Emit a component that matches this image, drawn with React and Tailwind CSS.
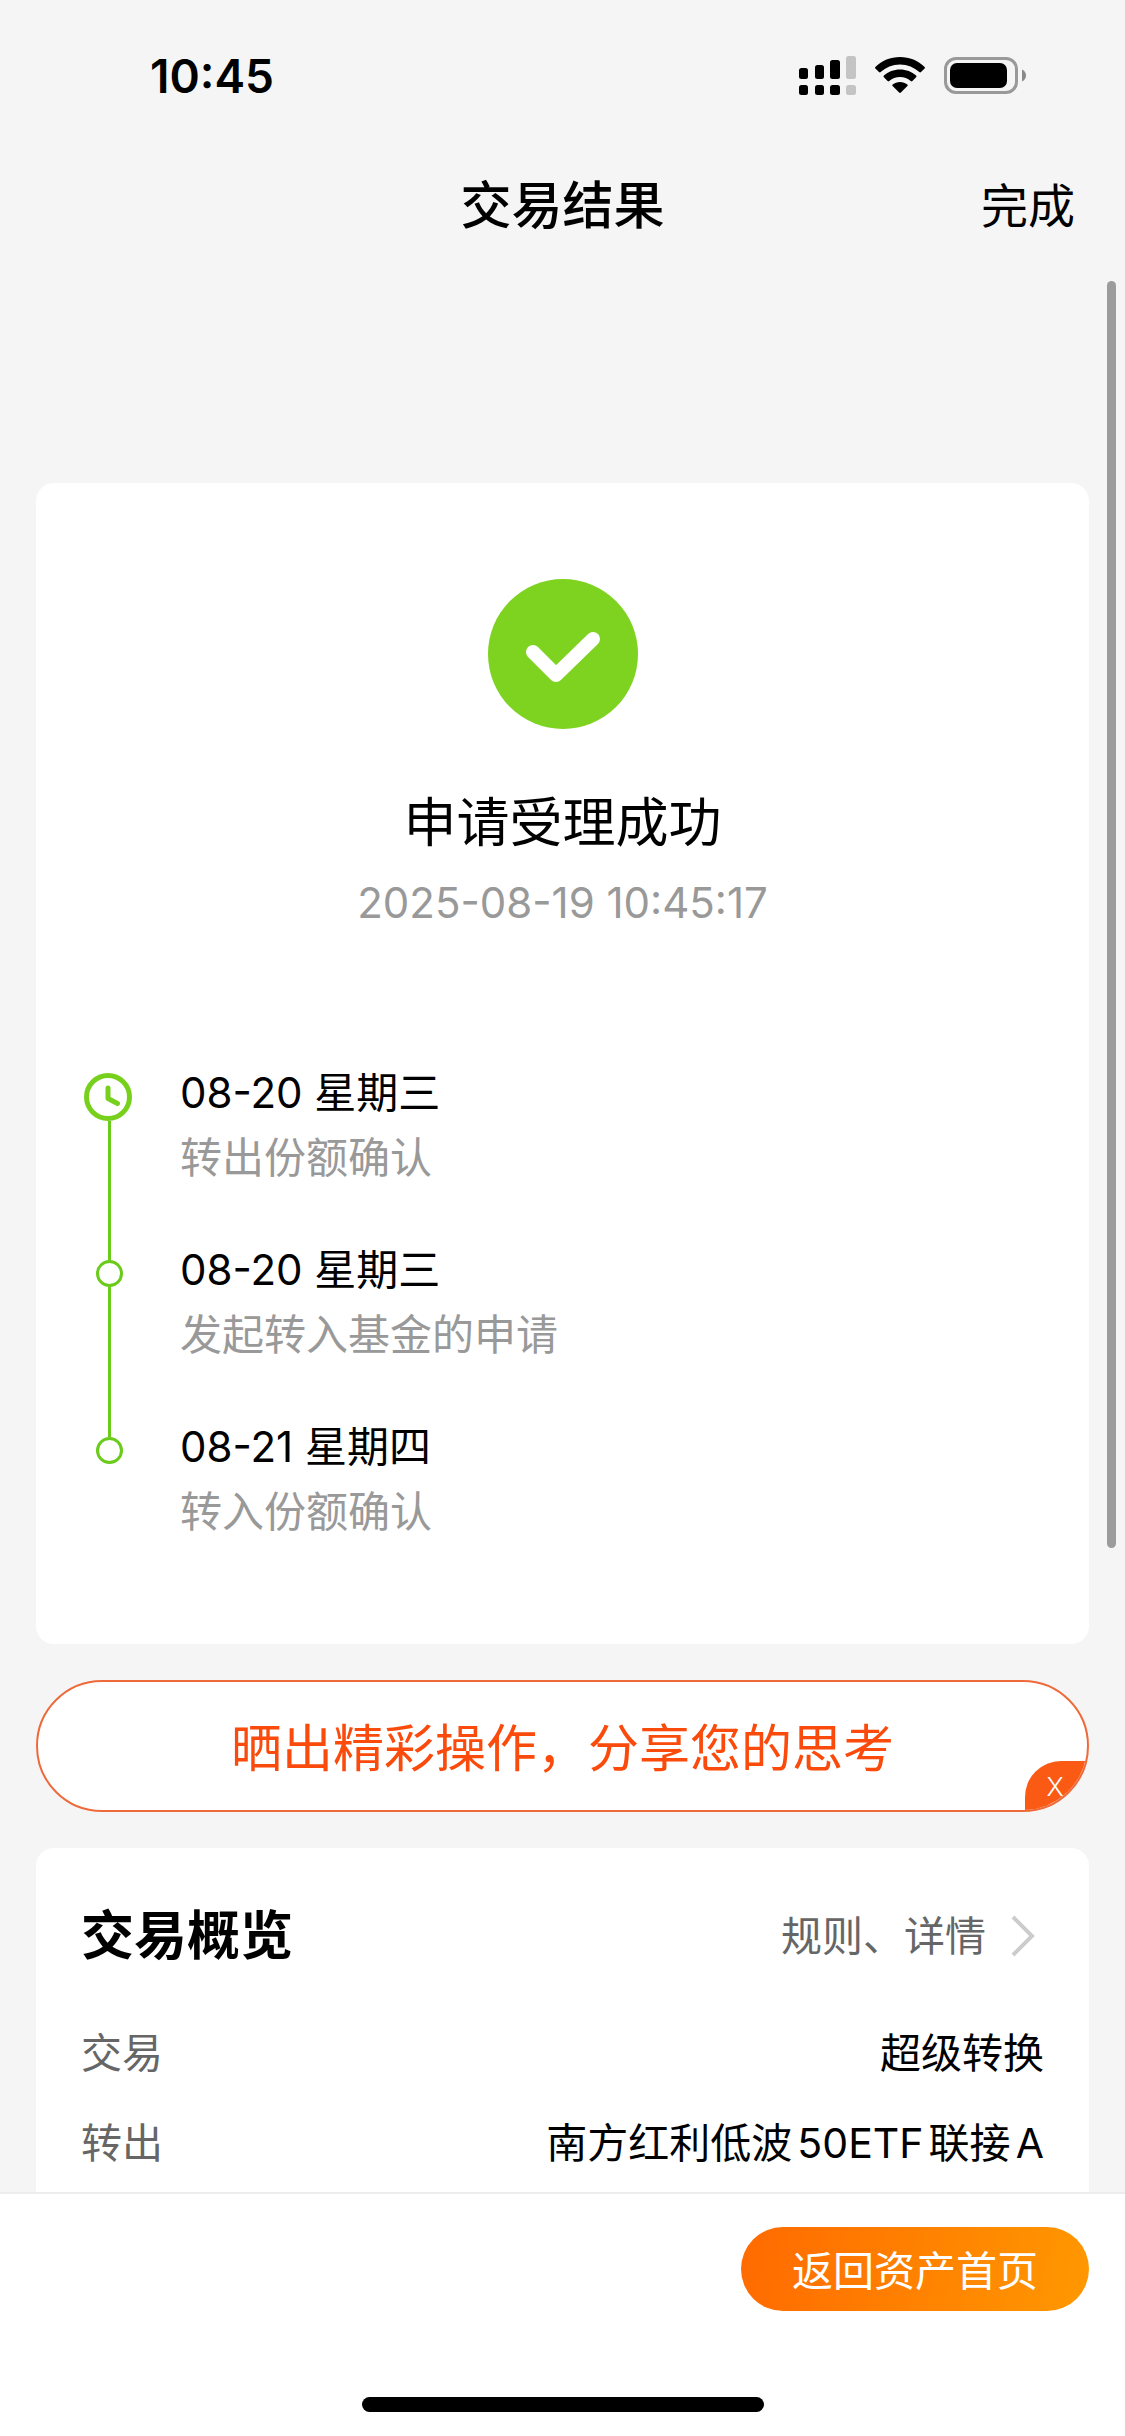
import React from 'react';

const steps = [
    { date: '08-20 星期三', text: '转出份额确认' },
    { date: '08-20 星期三', text: '发起转入基金的申请' },
    { date: '08-21 星期四', text: '转入份额确认' },
];

const overview = [
    { label: '交易', value: '超级转换' },
    { label: '转出', value: '南方红利低波50ETF联接A' },
];

function SignalIcon() {
    return (
        <svg width="57" height="39" viewBox="0 0 57 39" aria-hidden="true">
            <g fill="#000">
                <rect x="0" y="12" width="9" height="11" rx="2.5" />
                <rect x="16" y="9" width="9" height="14" rx="2.5" />
                <rect x="31" y="4" width="10" height="19" rx="2.5" />
                <rect x="0" y="29" width="9" height="10" rx="2.5" />
                <rect x="16" y="29" width="9" height="10" rx="2.5" />
                <rect x="31" y="29" width="10" height="10" rx="2.5" />
            </g>
            <g fill="#c4c4c4">
                <rect x="47" y="0" width="10" height="23" rx="2.5" />
                <rect x="47" y="29" width="10" height="10" rx="2.5" />
            </g>
        </svg>
    );
}

function WifiIcon() {
    return (
        <svg width="50" height="36" viewBox="0 0 50 36" aria-hidden="true">
            <path d="M25 0C34.500 0 43.200 3.600 49.600 9.900Q50.400 10.700 49.600 11.500L46 15.100Q45.200 15.900 44.300 15.100C39.200 10.300 32.500 7.400 25 7.400S10.800 10.300 5.700 15.100Q4.800 15.900 4 15.100L.4 11.500Q-.4 10.700 .4 9.900C6.800 3.600 15.500 0 25 0Z" />
            <path d="M25 12.500C31.200 12.500 36.800 14.800 41.100 18.600Q42 19.400 41.100 20.300L37.400 24Q36.600 24.800 35.700 24C32.800 21.500 29.100 20 25 20S17.200 21.500 14.300 24Q13.400 24.800 12.600 24L8.900 20.300Q8 19.400 8.900 18.600C13.200 14.800 18.800 12.500 25 12.500Z" />
            <path d="M25 25C27.800 25 30.300 25.900 32.300 27.500Q33.200 28.300 32.400 29.100L25.900 35.500Q25 36.300 24.100 35.500L17.600 29.100Q16.800 28.300 17.700 27.500C19.700 25.900 22.200 25 25 25Z" />
        </svg>
    );
}

function BatteryIcon() {
    return (
        <svg width="82" height="37" viewBox="0 0 82 37" aria-hidden="true">
            <rect x="1.500" y="1.500" width="71" height="34" rx="10.500" fill="none" stroke="#999" strokeWidth="3" />
            <rect x="6" y="6" width="57" height="25" rx="7" fill="#000" />
            <path d="M78 12.500C80.500 13.600 82 15.900 82 18.500S80.500 23.400 78 24.500Z" fill="#8a8a8a" />
        </svg>
    );
}

function SuccessIcon() {
    return (
        <svg width="150" height="150" viewBox="0 0 150 150" aria-hidden="true">
            <circle cx="75" cy="75" r="75" fill="#7ed321" />
            <path d="M45 73L68 96L105 60" fill="none" stroke="#fff" strokeWidth="14" strokeLinecap="round" strokeLinejoin="round" />
        </svg>
    );
}

function ClockIcon() {
    return (
        <svg className="shrink-0 self-start" width="48" height="48" viewBox="0 0 48 48" aria-hidden="true">
            <circle cx="24" cy="24" r="21.500" fill="none" stroke="#76d01c" strokeWidth="5" />
            <path d="M24 15V25.500L33.500 30.500" fill="none" stroke="#76d01c" strokeWidth="5" strokeLinecap="round" strokeLinejoin="round" />
        </svg>
    );
}

function Step({ step, first, last }) {
    return (
        <li className="flex gap-[45px]">
            <div className="flex w-[51px] flex-col items-center">
                {first ? (
                    <div className="flex w-full flex-col pt-[13px]"><ClockIcon /></div>
                ) : (
                    <>
                        <div className="h-[23px] w-[3px] bg-[#6acb1b]"></div>
                        <div className="size-[27px] shrink-0 rounded-full border-3 border-[#6acb1b] bg-white"></div>
                    </>
                )}
                {!last && <div className="w-[3px] flex-1 bg-[#6acb1b]"></div>}
            </div>
            <div className={last ? '' : 'pb-[47px]'}>
                <p className="text-[42px] leading-[66px]">{step.date}</p>
                <p className="text-[42px] leading-[64px] text-[#999]">{step.text}</p>
            </div>
        </li>
    );
}

export default function App() {
    return (
        <div className="relative flex h-screen flex-col overflow-hidden bg-[#f5f5f5] font-['Inter','Noto_Sans_CJK_SC',sans-serif] text-black">
            {/* status bar */}
            <div className="flex h-[144px] shrink-0 items-center justify-between pt-2 pr-[99px] pl-[150px]">
                <span className="text-[46px] leading-[60px] font-semibold">10:45</span>
                <div className="flex items-center gap-[19px] pb-0.5">
                    <SignalIcon />
                    <WifiIcon />
                    <BatteryIcon />
                </div>
            </div>

            <header className="grid h-[120px] shrink-0 grid-cols-[1fr_auto_1fr] items-center px-[50px] pt-1">
                <h1 className="col-start-2 text-[51px] leading-[72px] font-medium">交易结果</h1>
                <button type="button" className="justify-self-end text-[47px] leading-[72px]">完成</button>
            </header>

            <main className="flex min-h-0 flex-1 flex-col gap-9 px-9 pt-[219px]">
                <section className="rounded-[18px] bg-white px-12 pt-24 pb-[100px]">
                    <div className="flex flex-col items-center">
                        <SuccessIcon />
                        <h2 className="mt-[58px] text-[53px] leading-[72px]">申请受理成功</h2>
                        <p className="mt-[14px] text-[42px] leading-[60px] text-[#999]">2025-08-19 10:45:17</p>
                    </div>
                    <ol className="mt-[127px]">
                        {steps.map((step, i) => (
                            <Step key={i} step={step} first={i === 0} last={i === steps.length - 1} />
                        ))}
                    </ol>
                </section>

                <div className="relative shrink-0 overflow-hidden rounded-full border-2 border-[#ee6a3a] bg-white">
                    <button type="button" className="block h-32 w-full pt-1.5 text-[51px] text-[#fa4b0c]">晒出精彩操作，分享您的思考</button>
                    <button type="button" aria-label="关闭" className="absolute -right-0.5 -bottom-0.5 h-[51px] w-16 rounded-tl-[36px] bg-[#fb5a14] pr-1 text-[26px] font-light text-white">X</button>
                </div>

                <section className="flex-1 rounded-t-[18px] bg-white px-[45px] pt-[52px]">
                    <div className="flex items-center justify-between">
                        <h2 className="text-[53px] leading-[72px] font-bold">交易概览</h2>
                        <a href="#detail" className="flex items-center gap-6 pr-2 text-[41px] leading-[60px] text-[#666]">
                            规则、详情
                            <svg width="26" height="42" viewBox="0 0 26 42" fill="none" stroke="#ccc" strokeWidth="4" aria-hidden="true">
                                <path d="M3 2L22 21L3 40" />
                            </svg>
                        </a>
                    </div>
                    <dl className="mt-[51px] flex flex-col gap-[30px] text-[41px] leading-[60px] [text-autospace:normal]">
                        {overview.map((row) => (
                            <div key={row.label} className="flex justify-between">
                                <dt className="text-[#666]">{row.label}</dt>
                                <dd>{row.value}</dd>
                            </div>
                        ))}
                    </dl>
                </section>
            </main>

            {/* scroll thumb */}
            <div className="absolute top-[281px] right-[9px] h-[1267px] w-[9px] rounded-full bg-[#9c9c9c]"></div>

            <footer className="flex shrink-0 flex-col border-t-2 border-[#ececec] bg-white px-9 pt-[33px] pb-6">
                <button type="button" className="h-[84px] self-end rounded-full bg-[linear-gradient(100deg,#ff6a00,#ff9800)] px-[51px] pt-1 text-[41px] leading-[60px] text-white">返回资产首页</button>
                <div className="mt-[86px] h-[15px] w-[402px] self-center rounded-full bg-black"></div>
            </footer>
        </div>
    );
}
